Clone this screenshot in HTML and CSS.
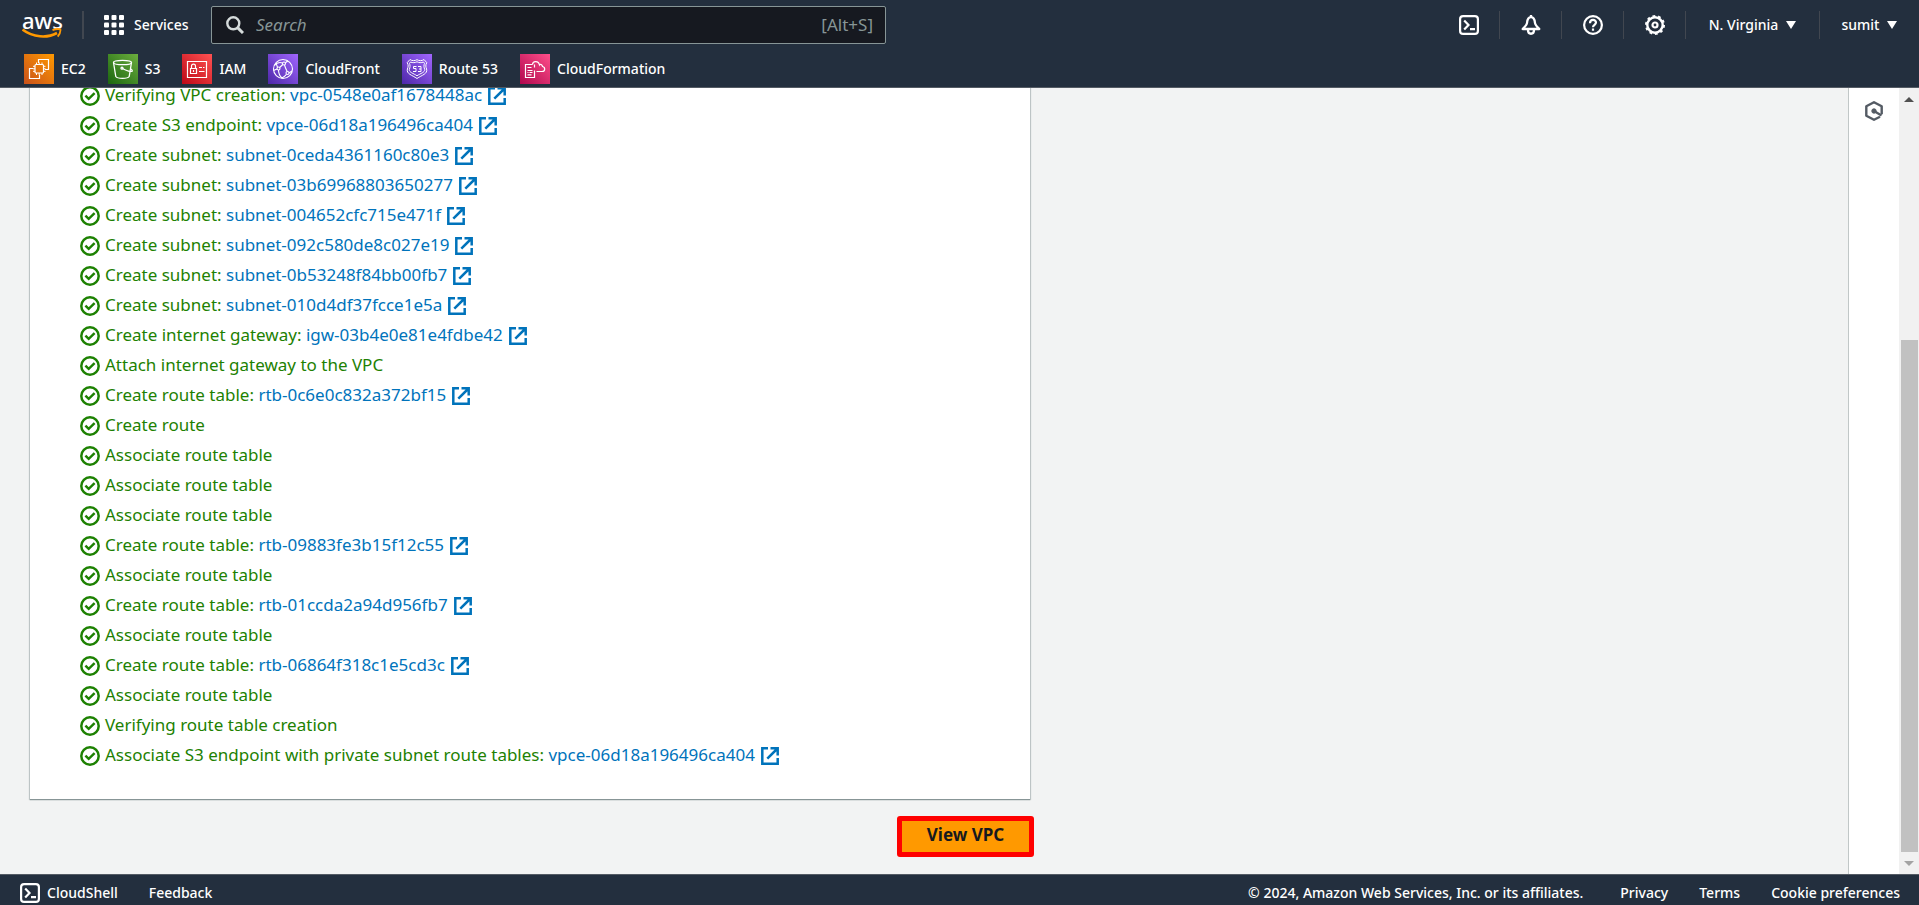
FILE: index.html
```
<!DOCTYPE html>
<html lang="en">
<head>
<meta charset="utf-8">
<title>Create VPC workflow</title>
<link rel="stylesheet" href="styles.css">
</head>
<body>
<svg class="sprite" aria-hidden="true">
  <defs>
    <linearGradient id="g-orange" x1="0" y1="1" x2="1" y2="0"><stop offset="0" stop-color="#c8511b"/><stop offset="1" stop-color="#f90"/></linearGradient>
    <linearGradient id="g-green" x1="0" y1="1" x2="1" y2="0"><stop offset="0" stop-color="#1b660f"/><stop offset="1" stop-color="#6cae3e"/></linearGradient>
    <linearGradient id="g-red" x1="0" y1="1" x2="1" y2="0"><stop offset="0" stop-color="#bd0816"/><stop offset="1" stop-color="#ff5252"/></linearGradient>
    <linearGradient id="g-purple" x1="0" y1="1" x2="1" y2="0"><stop offset="0" stop-color="#4d27a8"/><stop offset="1" stop-color="#a166ff"/></linearGradient>
    <linearGradient id="g-pink" x1="0" y1="1" x2="1" y2="0"><stop offset="0" stop-color="#b0084d"/><stop offset="1" stop-color="#ff4f8b"/></linearGradient>
    <symbol id="ok" viewBox="0 0 20 20"><g fill="none" stroke="currentColor" stroke-width="2.500"><circle cx="10" cy="10" r="8.700"/><path d="M5.400 9.600l3.300 3.200 5.900-5.600"/></g></symbol>
    <symbol id="ext" viewBox="0 0 18 18"><g fill="none" stroke="currentColor" stroke-width="2.500"><path d="M7 1.300H1.300v15.400h15.400V11"/><path d="M9.500 1.300h7.200v7.200M16.500 1.500L6.300 11.700"/></g></symbol>
    <symbol id="shell" viewBox="0 0 20 20"><g fill="none" stroke="currentColor" stroke-width="2.200"><rect x="1.100" y="1.100" width="17.800" height="17.800" rx="3"/><path d="M5.200 5.500L9.500 10l-4.300 4.500M11 14.200h5"/></g></symbol>
  </defs>
</svg>

<header class="top">
  <div class="bar">
    <a class="logo" href="#" aria-label="aws home"><span>aws</span>
      <svg width="40" height="11" viewBox="0 0 40 11"><path d="M.5 1.500C11 9.500 25 10.500 35 5" fill="none" stroke="#f90" stroke-width="2.600"/><path d="M30.500 2.200c3-1.200 6-1.500 7.900-.8.300 2.300-.8 5-2.700 7.200" fill="none" stroke="#f90" stroke-width="1.800"/></svg>
    </a>
    <span class="rule"></span>
    <button class="services" type="button">
      <svg width="20" height="20" viewBox="0 0 20 20" fill="currentColor"><rect width="5" height="5" rx="1"/><rect x="7.500" width="5" height="5" rx="1"/><rect x="15" width="5" height="5" rx="1"/><rect y="7.500" width="5" height="5" rx="1"/><rect x="7.500" y="7.500" width="5" height="5" rx="1"/><rect x="15" y="7.500" width="5" height="5" rx="1"/><rect y="15" width="5" height="5" rx="1"/><rect x="7.500" y="15" width="5" height="5" rx="1"/><rect x="15" y="15" width="5" height="5" rx="1"/></svg>
      Services
    </button>
    <label class="search">
      <svg width="18" height="18" viewBox="0 0 18 18" fill="none" stroke="currentColor"><circle cx="7.300" cy="7.300" r="6" stroke-width="2.400"/><path d="M11.600 11.600L17 17" stroke-width="3"/></svg>
      <input type="text" placeholder="Search" aria-label="Search">
      <span>[Alt+S]</span>
    </label>
    <nav class="tools" aria-label="Account tools">
      <button type="button" aria-label="CloudShell"><svg width="20" height="20"><use href="#shell"/></svg></button>
      <button type="button" aria-label="Notifications"><svg width="20" height="20" viewBox="0 0 20 20" fill="none" stroke="currentColor" stroke-width="2.300" stroke-linejoin="round"><path d="M10 2.200C6.800 2.200 6.300 4.500 6 8c-.2 2-1.800 3.500-4.300 6h16.600C15.800 11.500 14.200 10 14 8c-.3-3.500-.8-5.800-4-5.800z"/><path d="M10 0v3M7 15c0 5 6 5 6 0"/></svg></button>
      <button type="button" aria-label="Support"><svg width="20" height="20" viewBox="0 0 20 20" fill="none" stroke="currentColor" stroke-width="2.200"><circle cx="10" cy="10" r="8.900"/><path d="M7 8.200c0-4.300 6-4.200 6-.6 0 2.200-3 2.200-3 4.600M10 13.600v2.200"/></svg></button>
      <button type="button" aria-label="Settings"><svg width="20" height="20" viewBox="0 0 20 20" fill="none" stroke="currentColor"><circle cx="10" cy="10" r="7.700" stroke-width="2.400"/><circle cx="10" cy="10" r="9" stroke-width="2" stroke-dasharray="2.800 2.855"/><circle cx="10" cy="10" r="2.500" stroke-width="2.200"/></svg></button>
      <button type="button" class="wide">N. Virginia <i></i></button>
      <button type="button" class="last">sumit <i></i></button>
    </nav>
  </div>
  <nav class="favs" aria-label="Favorites">
    <a href="#"><svg width="30" height="30" viewBox="0 0 30 30"><rect width="30" height="30" fill="url(#g-orange)"/><g fill="none" stroke="#fff"><path d="M9 14.500H5.500v10h10V21M14.500 9V5.500h10v10H21" stroke-width="1.200"/><rect x="11" y="10.500" width="8.500" height="8.500" rx="1" stroke-width="1.200"/><path d="M12.500 8.500v2M15.200 8.500v2M18 8.500v2M12.500 19v2M15.200 19v2M18 19v2M9 12.300h2M9 14.800h2M9 17.300h2M19.500 12.300h2M19.500 14.800h2M19.500 17.300h2"/></g></svg>EC2</a>
    <a href="#"><svg width="30" height="30" viewBox="0 0 30 30"><rect width="30" height="30" fill="url(#g-green)"/><g fill="none" stroke="#fff" stroke-width="1.300"><ellipse cx="14.500" cy="8.500" rx="9" ry="2.200"/><path d="M5.500 8.500l2.300 14c1.700 2.500 11.700 2.500 13.400 0l2.300-14M14.500 14.500c4 2.400 9 3.500 9.800 2.600.5-.9-.7-1.700-1.800-2.500"/><circle cx="14" cy="14.200" r="1"/></g></svg>S3</a>
    <a href="#"><svg width="30" height="30" viewBox="0 0 30 30"><rect width="30" height="30" fill="url(#g-red)"/><g fill="none" stroke="#fff" stroke-width="1.200"><path d="M5.500 7.500h19v16h-19zM8.500 14.500h6v5h-6zM9.500 14.500V12c0-2.600 4-2.600 4 0v2.500M11.500 16v2M17 13.500h3M21 13.500h1.500M17 17.500h5.500"/></g></svg>IAM</a>
    <a href="#"><svg width="30" height="30" viewBox="0 0 30 30"><rect width="30" height="30" fill="url(#g-purple)"/><g fill="none" stroke="#fff" stroke-width="1.100"><circle cx="15" cy="15" r="9.500"/><circle cx="16" cy="9.500" r="1.500"/><circle cx="10.500" cy="14.500" r="1.500"/><circle cx="19.500" cy="19" r="1.500"/><path d="M6.500 11.500c2-2.500 5-3.500 8-2.500M16.500 11c.8 2.600 1.600 4.500 2.700 6.500M14.800 10.500l-3.200 3M10.500 16c0 3 1.200 6 3.500 8M18.500 20.300c-1.400 1.600-3 3-5 4M5.500 16.500l3.500-1.500M17.400 8.800l2.600-2M21 19l3-2M9.500 13.200L8 9"/></g></svg>CloudFront</a>
    <a href="#"><svg width="30" height="30" viewBox="0 0 30 30"><rect width="30" height="30" fill="url(#g-purple)"/><g fill="none" stroke="#fff"><path d="M8 5.500c2 1.600 5 1.400 7 .2 2 1.200 5 1.400 7-.2l2.800 3.200c-1.500 2.500-1 4.300-.2 6.300 1.200 5-4.600 6-9.600 9.500-5-3.500-10.800-4.500-9.600-9.500.8-2 1.300-3.800-.2-6.300z"/><path d="M8.500 8c2.200 1 4.500.8 6.500-.2 2 1 4.300 1.200 6.500.2l1 1.300c-.8 2-.7 4 .2 6.200.2 3-4 3.700-7.700 6.300-3.700-2.600-7.900-3.300-7.700-6.300.9-2.200 1-4.200.2-6.200z"/><path d="M14.500 12.500h-3v2h2.500v3h-3M16 12.500h3v5h-3M17 15h2"/></g></svg>Route 53</a>
    <a href="#"><svg width="30" height="30" viewBox="0 0 30 30"><rect width="30" height="30" fill="url(#g-pink)"/><g fill="none" stroke="#fff" stroke-width="1.200"><path d="M12.500 10.500h-7v13h9v-7M14.500 10.500v3M7.500 13.500h4M7.500 16.500h5M7.500 18.500h1M9.500 18.500h3M7.500 20.800h4M16.500 17.500h5.500c3.500 0 3.500-4.500.5-5-.2-2-2.200-2.500-3-1.500-.8-4.500-6.800-4.500-7-.5"/></g></svg>CloudFormation</a>
  </nav>
</header>

<div class="body">
  <main class="content">
    <section class="card">
      <ul class="steps">
        <li><svg><use href="#ok"/></svg><span>Verifying VPC creation: <a href="#">vpc-0548e0af1678448ac<svg><use href="#ext"/></svg></a></span></li>
        <li><svg><use href="#ok"/></svg><span>Create S3 endpoint: <a href="#">vpce-06d18a196496ca404<svg><use href="#ext"/></svg></a></span></li>
        <li><svg><use href="#ok"/></svg><span>Create subnet: <a href="#">subnet-0ceda4361160c80e3<svg><use href="#ext"/></svg></a></span></li>
        <li><svg><use href="#ok"/></svg><span>Create subnet: <a href="#">subnet-03b69968803650277<svg><use href="#ext"/></svg></a></span></li>
        <li><svg><use href="#ok"/></svg><span>Create subnet: <a href="#">subnet-004652cfc715e471f<svg><use href="#ext"/></svg></a></span></li>
        <li><svg><use href="#ok"/></svg><span>Create subnet: <a href="#">subnet-092c580de8c027e19<svg><use href="#ext"/></svg></a></span></li>
        <li><svg><use href="#ok"/></svg><span>Create subnet: <a href="#">subnet-0b53248f84bb00fb7<svg><use href="#ext"/></svg></a></span></li>
        <li><svg><use href="#ok"/></svg><span>Create subnet: <a href="#">subnet-010d4df37fcce1e5a<svg><use href="#ext"/></svg></a></span></li>
        <li><svg><use href="#ok"/></svg><span>Create internet gateway: <a href="#">igw-03b4e0e81e4fdbe42<svg><use href="#ext"/></svg></a></span></li>
        <li><svg><use href="#ok"/></svg><span>Attach internet gateway to the VPC</span></li>
        <li><svg><use href="#ok"/></svg><span>Create route table: <a href="#">rtb-0c6e0c832a372bf15<svg><use href="#ext"/></svg></a></span></li>
        <li><svg><use href="#ok"/></svg><span>Create route</span></li>
        <li><svg><use href="#ok"/></svg><span>Associate route table</span></li>
        <li><svg><use href="#ok"/></svg><span>Associate route table</span></li>
        <li><svg><use href="#ok"/></svg><span>Associate route table</span></li>
        <li><svg><use href="#ok"/></svg><span>Create route table: <a href="#">rtb-09883fe3b15f12c55<svg><use href="#ext"/></svg></a></span></li>
        <li><svg><use href="#ok"/></svg><span>Associate route table</span></li>
        <li><svg><use href="#ok"/></svg><span>Create route table: <a href="#">rtb-01ccda2a94d956fb7<svg><use href="#ext"/></svg></a></span></li>
        <li><svg><use href="#ok"/></svg><span>Associate route table</span></li>
        <li><svg><use href="#ok"/></svg><span>Create route table: <a href="#">rtb-06864f318c1e5cd3c<svg><use href="#ext"/></svg></a></span></li>
        <li><svg><use href="#ok"/></svg><span>Associate route table</span></li>
        <li><svg><use href="#ok"/></svg><span>Verifying route table creation</span></li>
        <li><svg><use href="#ok"/></svg><span>Associate S3 endpoint with private subnet route tables: <a href="#">vpce-06d18a196496ca404<svg><use href="#ext"/></svg></a></span></li>
      </ul>
    </section>
    <div class="actions"><button class="primary" type="button">View VPC</button></div>
  </main>
  <aside class="rail">
    <button type="button" aria-label="Open panel"><svg width="20" height="20" viewBox="0 0 20 20" fill="none" stroke="currentColor" stroke-width="2.400" stroke-linejoin="round"><path d="M16 15.800l-6 3-7.700-4.100V5.300L10 1.200l7.700 4.100v8"/><path d="M10 10l7.500 4.500"/><circle cx="10" cy="10" r="2.200" fill="currentColor" stroke-width="1"/></svg></button>
  </aside>
  <div class="scroll" aria-hidden="true"><i class="up"></i><div class="track"><div class="thumb"></div></div><i class="down"></i></div>
</div>

<footer class="foot">
  <button type="button"><svg width="20" height="20"><use href="#shell"/></svg>CloudShell</button>
  <a href="#">Feedback</a>
  <span class="copy">© 2024, Amazon Web Services, Inc. or its affiliates.</span>
  <a href="#">Privacy</a>
  <a href="#">Terms</a>
  <a href="#">Cookie preferences</a>
</footer>
</body>
</html>
```
FILE: styles.css
```
* { box-sizing: border-box; }
body { margin: 0; height: 100vh; display: flex; flex-direction: column; overflow: hidden; font-family: "Noto Sans", "Open Sans", sans-serif; font-size: 17px; line-height: 30px; background: #f2f3f3; }
a { color: inherit; text-decoration: none; }
button { margin: 0; padding: 0; border: 0; background: none; color: inherit; font: inherit; cursor: pointer; }
svg { display: block; flex: none; }
.sprite { position: absolute; width: 0; height: 0; }

.top { flex: none; background: #232f3e; color: #fff; border-bottom: 1px solid #545b64; font-size: 14px; font-weight: 500; line-height: 20px; }
.bar { display: flex; align-items: center; height: 50px; }
.logo { display: flex; flex-direction: column; width: 60px; padding-left: 22px; font-size: 22px; line-height: 16px; }
.rule { width: 2px; height: 28px; margin-left: 22px; background: #414750; }
.services { display: flex; align-items: center; gap: 10px; width: 87px; margin-left: 20px; white-space: nowrap; }
.search { display: flex; align-items: center; gap: 12px; width: 675px; height: 38px; margin-left: 20px; padding: 0 12px 0 14px; border: 1px solid #879596; border-radius: 2px; background: #161920; color: #d5dbdb; font-size: 17px; font-weight: 400; }
.search input { flex: 1; min-width: 0; padding: 0; border: 0; outline: 0; background: none; color: #fff; font: inherit; }
.search input::placeholder { color: #879596; font-style: italic; opacity: 1; }
.search span { color: #879596; }
.tools { display: flex; align-items: center; margin-left: auto; }
.tools button { display: flex; align-items: center; justify-content: center; gap: 8px; width: 62px; height: 28px; border-right: 1px solid #414750; }
.tools .wide { width: 134px; }
.tools .last { width: 99px; border: 0; }
.tools i { border: 5px solid transparent; border-top: 8px solid #fff; border-bottom: 0; }
.favs { display: flex; gap: 22px; height: 37px; padding: 4px 24px 0; }
.favs a { display: flex; align-items: center; gap: 7px; height: 30px; }

.body { flex: 1; display: flex; min-height: 0; }
.content { flex: 1; display: flex; flex-direction: column; justify-content: flex-end; min-width: 0; padding: 0 30px 17px; overflow: hidden; }
.card { width: 1000px; padding: 0 50px 28px; background: #fff; box-shadow: 0 1px 1px #879596, 0 0 1px 1px #c8cecf; }
.steps { margin: 0; padding: 0; list-style: none; color: #1d8102; }
.steps li { display: flex; align-items: center; gap: 5px; height: 30px; white-space: nowrap; }
.steps li > svg { width: 20px; height: 20px; }
.steps li > span { padding-bottom: 2px; }
.steps a { display: inline-flex; align-items: center; gap: 6px; color: #0073bb; }
.steps a svg { width: 18px; height: 18px; margin-top: 2px; }
.actions { display: flex; justify-content: flex-end; width: 1004px; padding-top: 17px; }
.primary { width: 137px; height: 41px; border: 5px solid #f00; border-radius: 3px; background: #f90; color: #16191f; font-weight: 700; line-height: 28px; padding-bottom: 3px; }
.rail { flex: none; width: 51px; border-left: 1px solid #c1c7c7; background: #fff; color: #545b64; }
.rail button { display: block; margin: 13px auto 0; width: 20px; }
.scroll { flex: none; display: flex; flex-direction: column; align-items: center; width: 20px; background: #f1f1f1; }
.scroll i { width: 10px; height: 5px; margin: 9px 0 8px; border: 5px solid transparent; border-top: 0; border-bottom-color: #505050; }
.scroll .down { margin: 9px 0 8px; border-top: 5px solid #a3a3a3; border-bottom: 0; }
.track { flex: 1; display: flex; align-items: flex-end; width: 17px; }
.thumb { width: 17px; height: 69%; background: #c1c1c1; }

.foot { flex: none; display: flex; align-items: center; gap: 31px; height: 31px; padding: 6px 19px 0 20px; overflow: hidden; border-top: 1px solid #545b64; background: #232f3e; color: #fff; font-size: 14px; font-weight: 500; line-height: 20px; white-space: nowrap; }
.foot button { display: flex; align-items: center; gap: 7px; }
.copy { margin-left: auto; padding-right: 6px; }
```
